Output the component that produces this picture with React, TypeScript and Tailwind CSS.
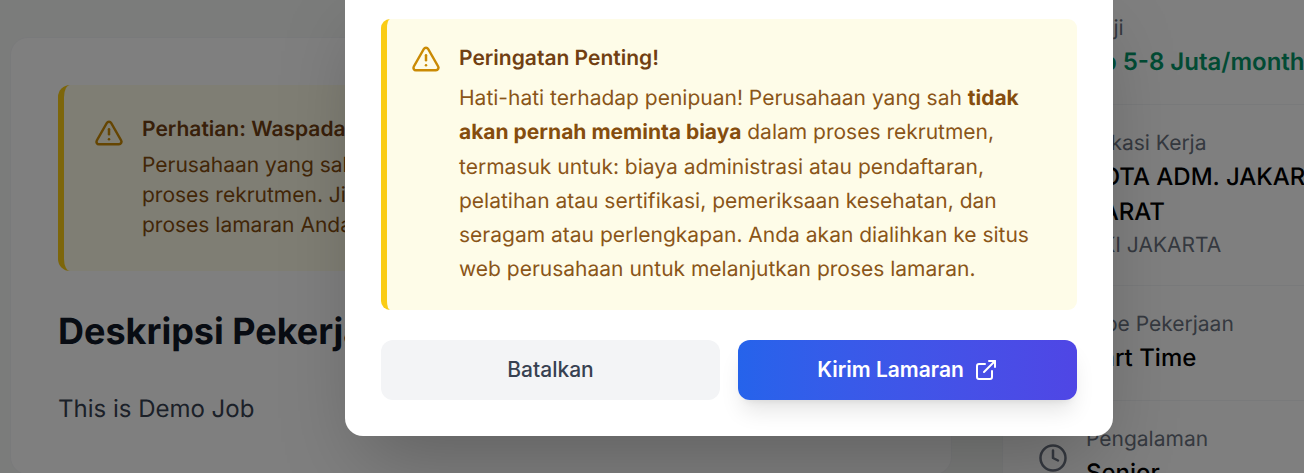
import { Briefcase, Clock, ExternalLink, MapPin, TriangleAlert, Wallet } from "lucide-react";

const InfoRow = ({
  icon,
  label,
  children,
  last,
}: {
  icon: React.ReactNode;
  label: string;
  children: React.ReactNode;
  last?: boolean;
}) => (
  <div className={`flex items-center gap-[18px] py-6 ${last ? "" : "border-b border-[#f3f4f6]"}`}>
    <div className="shrink-0 text-[#6b7280]">{icon}</div>
    <div className="whitespace-nowrap">
      <p className="text-[21px] leading-[30px] text-[#6b7280]">{label}</p>
      {children}
    </div>
  </div>
);

export default function App() {
  return (
    <div className="relative h-[473px] w-full overflow-hidden bg-[#f7f8f6] font-['Inter',sans-serif] [text-rendering:geometricPrecision]">
      <div className="flex items-start pl-[10px]">
        <div className="mt-[37px] w-[942px] shrink-0 rounded-[18px] border border-[#f3f4f6] bg-white p-[47px]">
          <div className="flex gap-[18px] rounded-xl border-l-[6px] border-[#facc15] bg-[#fefce8] p-[30px]">
            <TriangleAlert className="mt-[3px] h-[30px] w-[30px] shrink-0 text-[#ca8a04]" />
            <div className="text-[21px] leading-[30px]">
              <p className="font-semibold text-[#713f12]">Perhatian: Waspada Penipuan</p>
              <p className="mt-[6px] text-[#854d0e]">
                Perusahaan yang sah tidak akan pernah meminta biaya dalam
                <br />
                proses rekrutmen. Jika Anda diminta membayar, segera hentikan
                <br />
                proses lamaran Anda dan laporkan kepada kami.
              </p>
            </div>
          </div>
          <h2 className="mt-9 text-[36px] font-bold leading-[48px] text-[#111827]">Deskripsi Pekerjaan</h2>
          <p className="mt-9 text-2xl leading-[36px] text-[#374151]">This is Demo Job</p>
        </div>

        <div className="ml-[50px] -mt-[11px] w-[420px] shrink-0 border border-[#f3f4f6] bg-white px-[35px]">
          <InfoRow icon={<Wallet className="h-[30px] w-[30px]" />} label="Gaji">
            <p className="text-2xl font-semibold leading-[36px] text-[#059669]">Rp 5-8 Juta/month</p>
          </InfoRow>
          <InfoRow icon={<MapPin className="h-[30px] w-[30px]" />} label="Lokasi Kerja">
            <p className="mb-[2px] text-2xl font-medium leading-[35px] text-black">
              KOTA ADM. JAKARTA
              <br />
              BARAT
            </p>
            <p className="text-[21px] leading-[30px] text-[#6b7280]">DKI JAKARTA</p>
          </InfoRow>
          <InfoRow icon={<Briefcase className="h-[30px] w-[30px]" />} label="Tipe Pekerjaan">
            <p className="mb-[1px] text-2xl font-medium leading-[35px] text-black">Part Time</p>
          </InfoRow>
          <InfoRow icon={<Clock className="h-[30px] w-[30px]" />} label="Pengalaman" last>
            <p className="text-2xl font-medium leading-[35px] text-black">Senior</p>
          </InfoRow>
        </div>
      </div>

      {/* modal overlay, page is wider than the window so it centres further right */}
      <div className="absolute inset-y-0 left-0 flex w-[1458px] items-end justify-center bg-black/50 pb-[37px]">
        <div className="w-[768px] shrink-0 rounded-[18px] bg-white p-9 shadow-[0_37px_75px_-18px_rgba(0,0,0,0.25)]">
          <div className="flex gap-[18px] rounded-[9px] border-l-[6px] border-[#facc15] bg-[#fefce8] pb-[23px] pl-6 pr-6 pt-6">
            <TriangleAlert className="mt-[1px] h-[30px] w-[30px] shrink-0 text-[#ca8a04]" />
            <div className="text-[21px]">
              <p className="font-semibold leading-[32px] text-[#713f12]">Peringatan Penting!</p>
              <p className="mt-[7px] leading-[34.125px] text-[#8a5518]">
                Hati-hati terhadap penipuan! Perusahaan yang sah{" "}
                <strong className="font-bold text-[#854d0e]">tidak akan pernah meminta biaya</strong> dalam proses rekrutmen, termasuk
                untuk: biaya administrasi atau pendaftaran, pelatihan atau sertifikasi, pemeriksaan kesehatan, dan seragam
                atau perlengkapan. Anda akan dialihkan ke situs web perusahaan untuk melanjutkan proses lamaran.
              </p>
            </div>
          </div>
          <div className="mt-[30px] flex gap-[18px]">
            <button className="h-[60px] flex-1 rounded-xl bg-[#f3f4f6] text-[21px] font-medium text-[#374151]">
              Batalkan
            </button>
            <button className="flex h-[60px] flex-1 items-center justify-center gap-[10px] rounded-xl bg-gradient-to-r from-[#2563eb] to-[#4f46e5] text-[21px] font-semibold text-white shadow-[0_15px_22px_-4px_rgba(0,0,0,0.1),0_6px_9px_-6px_rgba(0,0,0,0.1)]">
              Kirim Lamaran
              <ExternalLink className="h-6 w-6" />
            </button>
          </div>
        </div>
      </div>
    </div>
  );
}
